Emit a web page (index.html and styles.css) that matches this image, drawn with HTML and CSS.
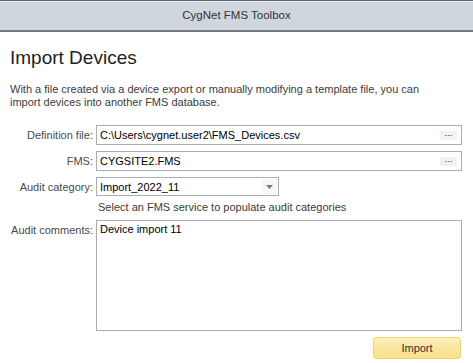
FILE: index.html
```html
<!DOCTYPE html>
<html>
    <head>
        <meta charset="UTF-8">
        <meta name="viewport" content="width=device-width, initial-scale=1.0">
        <link rel="stylesheet" href="styles.css">
    </head>

    <body>

        <div class="titlebar">CygNet FMS Toolbox</div>

        <div class="content">
            <h1 class="heading">Import Devices</h1>

            <p class="intro">With a file created via a device export or manually modifying a template file, you can import devices into another FMS database.</p>

            <div class="form">
                <label class="label">Definition file:</label>
                <div class="field">
                    <span class="value">C:\Users\cygnet.user2\FMS_Devices.csv</span>
                    <span class="browse">...</span>
                </div>

                <label class="label">FMS:</label>
                <div class="field">
                    <span class="value">CYGSITE2.FMS</span>
                    <span class="browse">...</span>
                </div>

                <label class="label">Audit category:</label>
                <div class="combo">
                    <span class="value">Import_2022_11</span>
                    <span class="arrow"><svg width="7" height="4" viewBox="0 0 7 4"><path d="M0 0H7L3.5 4Z" fill="#7a7a7a"/></svg></span>
                </div>

                <span></span>
                <div class="hint">Select an FMS service to populate audit categories</div>

                <label class="label">Audit comments:</label>
                <div class="memo">Device import 11</div>
            </div>

            <div class="actions">
                <button class="import">Import</button>
            </div>
        </div>

    </body>
</html>
```

FILE: styles.css
```css
body {
    margin: 0;
    background: #fff;
    font-family: "Liberation Sans", Arial, sans-serif;
    font-size: 11px;
    color: #3c3c3c;
}

.titlebar {
    height: 29px;
    line-height: 29px;
    border-top: 1px solid #5d6673;
    box-shadow: inset 0 1px 0 #eef1f4;
    border-bottom: 2px solid #76777f;
    background: #cfd6de;
    text-align: center;
    font-size: 11.5px;
    color: #333;
}

.content {
    padding: 0 11px 0 10px;
}

.heading {
    margin: 14px 0 0 0;
    font-size: 19px;
    font-weight: normal;
    line-height: 24px;
    color: #1e1e1e;
}

.intro {
    max-width: 420px;
    margin: 13px 0 0 0;
    line-height: 13px;
    color: #3c3c3c;
}

.form {
    display: grid;
    grid-template-columns: 83px 1fr;
    column-gap: 3px;
    row-gap: 6px;
    margin-top: 16px;
}

.label {
    text-align: right;
    line-height: 20px;
    color: #4a4a4a;
}

.field, .combo {
    display: flex;
    align-items: center;
    height: 18px;
    border: 1px solid #abadb3;
    background: #fff;
    color: #000;
}

.combo {
    width: 181px;
    height: 17px;
}

.value {
    flex: 1;
    padding-left: 3px;
    white-space: nowrap;
    overflow: hidden;
}

.browse {
    width: 17px;
    height: 9px;
    margin-right: 4px;
    background: #f2f2f2;
    font-size: 9px;
    line-height: 5px;
    text-align: center;
    color: #222;
}

.arrow {
    display: flex;
    align-items: center;
    justify-content: center;
    width: 15px;
    height: 15px;
    margin-right: 1px;
    background: #f7f7f7;
}

.hint {
    margin-top: -3px;
    padding-left: 2px;
    line-height: 14px;
    color: #3c3c3c;
}

.memo {
    height: 105px;
    margin-top: 0;
    padding: 2px 3px;
    border: 1px solid #abadb3;
    color: #000;
}

.actions {
    display: flex;
    justify-content: flex-end;
    margin-top: 6px;
    padding-right: 1px;
}

.import {
    width: 88px;
    height: 22px;
    border: 1px solid #f2d575;
    border-radius: 3px;
    background: linear-gradient(#fdf0bf, #fbe49a 55%, #fae28e);
    font-family: "Liberation Sans", Arial, sans-serif;
    font-size: 11px;
    color: #333;
}
```
